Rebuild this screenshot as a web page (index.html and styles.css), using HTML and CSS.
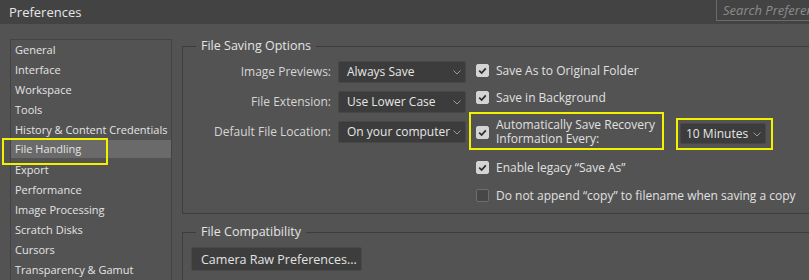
FILE: index.html
```html
<!DOCTYPE html>
<html lang="en">

<head>
  <meta charset="UTF-8">
  <title>Preferences</title>
  <link rel="stylesheet" href="styles.css">
</head>

<body>
  <div class="titlebar">
    <span class="title">Preferences</span>
    <div class="search">Search Preferences</div>
  </div>

  <div class="main">
    <ul class="categories">
      <li>General</li>
      <li>Interface</li>
      <li>Workspace</li>
      <li>Tools</li>
      <li>History &amp; Content Credentials</li>
      <li class="active">File Handling<span class="callout"></span></li>
      <li>Export</li>
      <li>Performance</li>
      <li>Image Processing</li>
      <li>Scratch Disks</li>
      <li>Cursors</li>
      <li>Transparency &amp; Gamut</li>
    </ul>

    <div class="content">
      <fieldset class="group saving">
        <legend>File Saving Options</legend>
        <div class="saving-body">
          <div class="fields">
            <label>Image Previews:</label>
            <div class="select wide">Always Save
              <svg class="chevron" viewBox="0 0 8 5"><path d="M0.5 0.5 L4 4 L7.5 0.5" /></svg>
            </div>
            <label>File Extension:</label>
            <div class="select wide">Use Lower Case
              <svg class="chevron" viewBox="0 0 8 5"><path d="M0.5 0.5 L4 4 L7.5 0.5" /></svg>
            </div>
            <label>Default File Location:</label>
            <div class="select wide">On your computer
              <svg class="chevron" viewBox="0 0 8 5"><path d="M0.5 0.5 L4 4 L7.5 0.5" /></svg>
            </div>
          </div>

          <div class="options">
            <div class="check-row">
              <span class="box checked"><svg viewBox="0 0 10 10"><path d="M2 5.2 L4.2 7.3 L8 3" /></svg></span>
              Save As to Original Folder
            </div>
            <div class="check-row">
              <span class="box checked"><svg viewBox="0 0 10 10"><path d="M2 5.2 L4.2 7.3 L8 3" /></svg></span>
              Save in Background
            </div>
            <div class="check-row recovery">
              <div class="recovery-label">
                <span class="box checked"><svg viewBox="0 0 10 10"><path d="M2 5.2 L4.2 7.3 L8 3" /></svg></span>
                <span class="recovery-text">Automatically Save Recovery<br>Information Every:</span>
                <span class="callout"></span>
              </div>
              <div class="select minutes">10 Minutes
                <svg class="chevron" viewBox="0 0 8 5"><path d="M0.5 0.5 L4 4 L7.5 0.5" /></svg>
                <span class="callout"></span>
              </div>
            </div>
            <div class="check-row legacy">
              <span class="box checked"><svg viewBox="0 0 10 10"><path d="M2 5.2 L4.2 7.3 L8 3" /></svg></span>
              Enable legacy “Save As”
            </div>
            <div class="check-row last">
              <span class="box"></span>
              Do not append “copy” to filename when saving a copy
            </div>
          </div>
        </div>
      </fieldset>

      <fieldset class="group compat">
        <legend>File Compatibility</legend>
        <button class="button">Camera Raw Preferences...</button>
      </fieldset>
    </div>
  </div>
</body>

</html>
```

FILE: styles.css
```css
/* Pagina basis */
body {
  margin: 0;
  background-color: #535353;
  color: #dcdcdc;
  font-family: "Open Sans", "Noto Sans", sans-serif;
  font-size: 12px;
  overflow: hidden;
}

/* Titelbalk bovenaan */
.titlebar {
  height: 24px;
  background-color: #434343;
  display: flex;
  justify-content: space-between;
  align-items: flex-start;
}

.title {
  padding-left: 9px;
  line-height: 24px;
  font-size: 13px;
  color: #e6e6e6;
}

.search {
  width: 93px;
  height: 21px;
  box-sizing: border-box;
  border: 1px solid #6a6a6a;
  border-top: none;
  border-right: none;
  padding-left: 6px;
  font-size: 13px;
  font-style: italic;
  line-height: 20px;
  color: #8c8c8c;
  white-space: nowrap;
  overflow: hidden;
}

/* Hoofdgedeelte: lijst links, opties rechts */
.main {
  display: flex;
  padding: 14px 0 0 10px;
}

.categories {
  list-style: none;
  margin: 1px 0 0 0;
  padding: 0;
  width: 160px;
  height: 240px;
  border: 1px solid #434343;
  flex-shrink: 0;
}

.categories li {
  line-height: 20px;
  padding-left: 4px;
  font-size: 11px;
  color: #e4e4e4;
  white-space: nowrap;
}

.categories li.active {
  position: relative;
  background-color: #6a6a6a;
  line-height: 18px;
  margin: 0 0 2px 0;
}

/* Gele kaders uit de screenshot */
.callout {
  position: absolute;
  border: 2px solid #f2f200;
  box-sizing: border-box;
  pointer-events: none;
}

.categories li.active .callout {
  left: -9px;
  top: -2px;
  width: 106px;
  height: 27px;
}

.content {
  margin-left: 10px;
  width: 660px;
  flex-shrink: 0;
}

/* Groepen met titel in de rand */
.group {
  margin: 0;
  padding: 0;
  border: 1px solid #3d3d3d;
  min-width: 0;
}

.group legend {
  margin-left: 13px;
  padding: 0 5px;
  font-size: 12.5px;
  line-height: 16px;
  color: #e4e4e4;
}

.saving {
  padding: 7px 0 8px 0;
}

.saving-body {
  display: flex;
  align-items: flex-start;
}

.fields {
  display: grid;
  grid-template-columns: 148px 128px;
  column-gap: 7px;
  row-gap: 8px;
}

.fields label {
  text-align: right;
  line-height: 22px;
  color: #d6d6d6;
}

/* Dropdowns */
.select {
  position: relative;
  height: 22px;
  box-sizing: border-box;
  background-color: #3c3c3c;
  border: 1px solid #474747;
  border-radius: 2px;
  padding-left: 8px;
  line-height: 20px;
  color: #e6e6e6;
  white-space: nowrap;
}

.chevron {
  position: absolute;
  right: 4px;
  top: 8px;
  width: 8px;
  height: 5px;
  fill: none;
  stroke: #9a9a9a;
  stroke-width: 1;
}

/* Checkbox kolom */
.options {
  margin: -1px 0 0 10px;
}

.check-row {
  display: flex;
  align-items: center;
  height: 20px;
  margin-bottom: 7px;
  white-space: nowrap;
  color: #e0e0e0;
}

.box {
  width: 13px;
  height: 13px;
  box-sizing: border-box;
  border-radius: 2px;
  border: 1px solid #6e6e6e;
  background-color: #474747;
  margin-right: 7px;
  flex-shrink: 0;
  display: flex;
}

.box.checked {
  background-color: #d4d4d4;
  border-color: #d4d4d4;
}

.box svg {
  width: 11px;
  height: 11px;
  fill: none;
  stroke: #2e2e2e;
  stroke-width: 1.6;
}

.check-row.recovery {
  height: 26px;
  margin-top: 12px;
  margin-bottom: 12px;
  align-items: flex-start;
}

.recovery-label {
  position: relative;
  display: flex;
  align-items: center;
  width: 192px;
  height: 26px;
  flex-shrink: 0;
}

.recovery-text {
  line-height: 14px;
}

.recovery-label .callout {
  left: -7px;
  top: -7px;
  width: 195px;
  height: 38px;
}

.select.minutes {
  width: 86px;
  height: 21px;
  margin: 4px 0 0 12px;
  padding-left: 5px;
  line-height: 19px;
  flex-shrink: 0;
}

.select.minutes .callout {
  left: -5px;
  top: -6px;
  width: 97px;
  height: 32px;
}

.check-row.legacy {
  margin-bottom: 8px;
}

.check-row.last {
  margin-bottom: 0;
}

.compat {
  margin-top: 10px;
  height: 80px;
  padding: 7px 0 0 0;
}

.button {
  margin-left: 8px;
  width: 171px;
  height: 24px;
  background-color: #3d3d3d;
  border: 1px solid #4a4a4a;
  border-radius: 2px;
  color: #e2e2e2;
  font-family: inherit;
  font-size: 12.5px;
  text-align: left;
  padding: 0 0 0 9px;
}
```
